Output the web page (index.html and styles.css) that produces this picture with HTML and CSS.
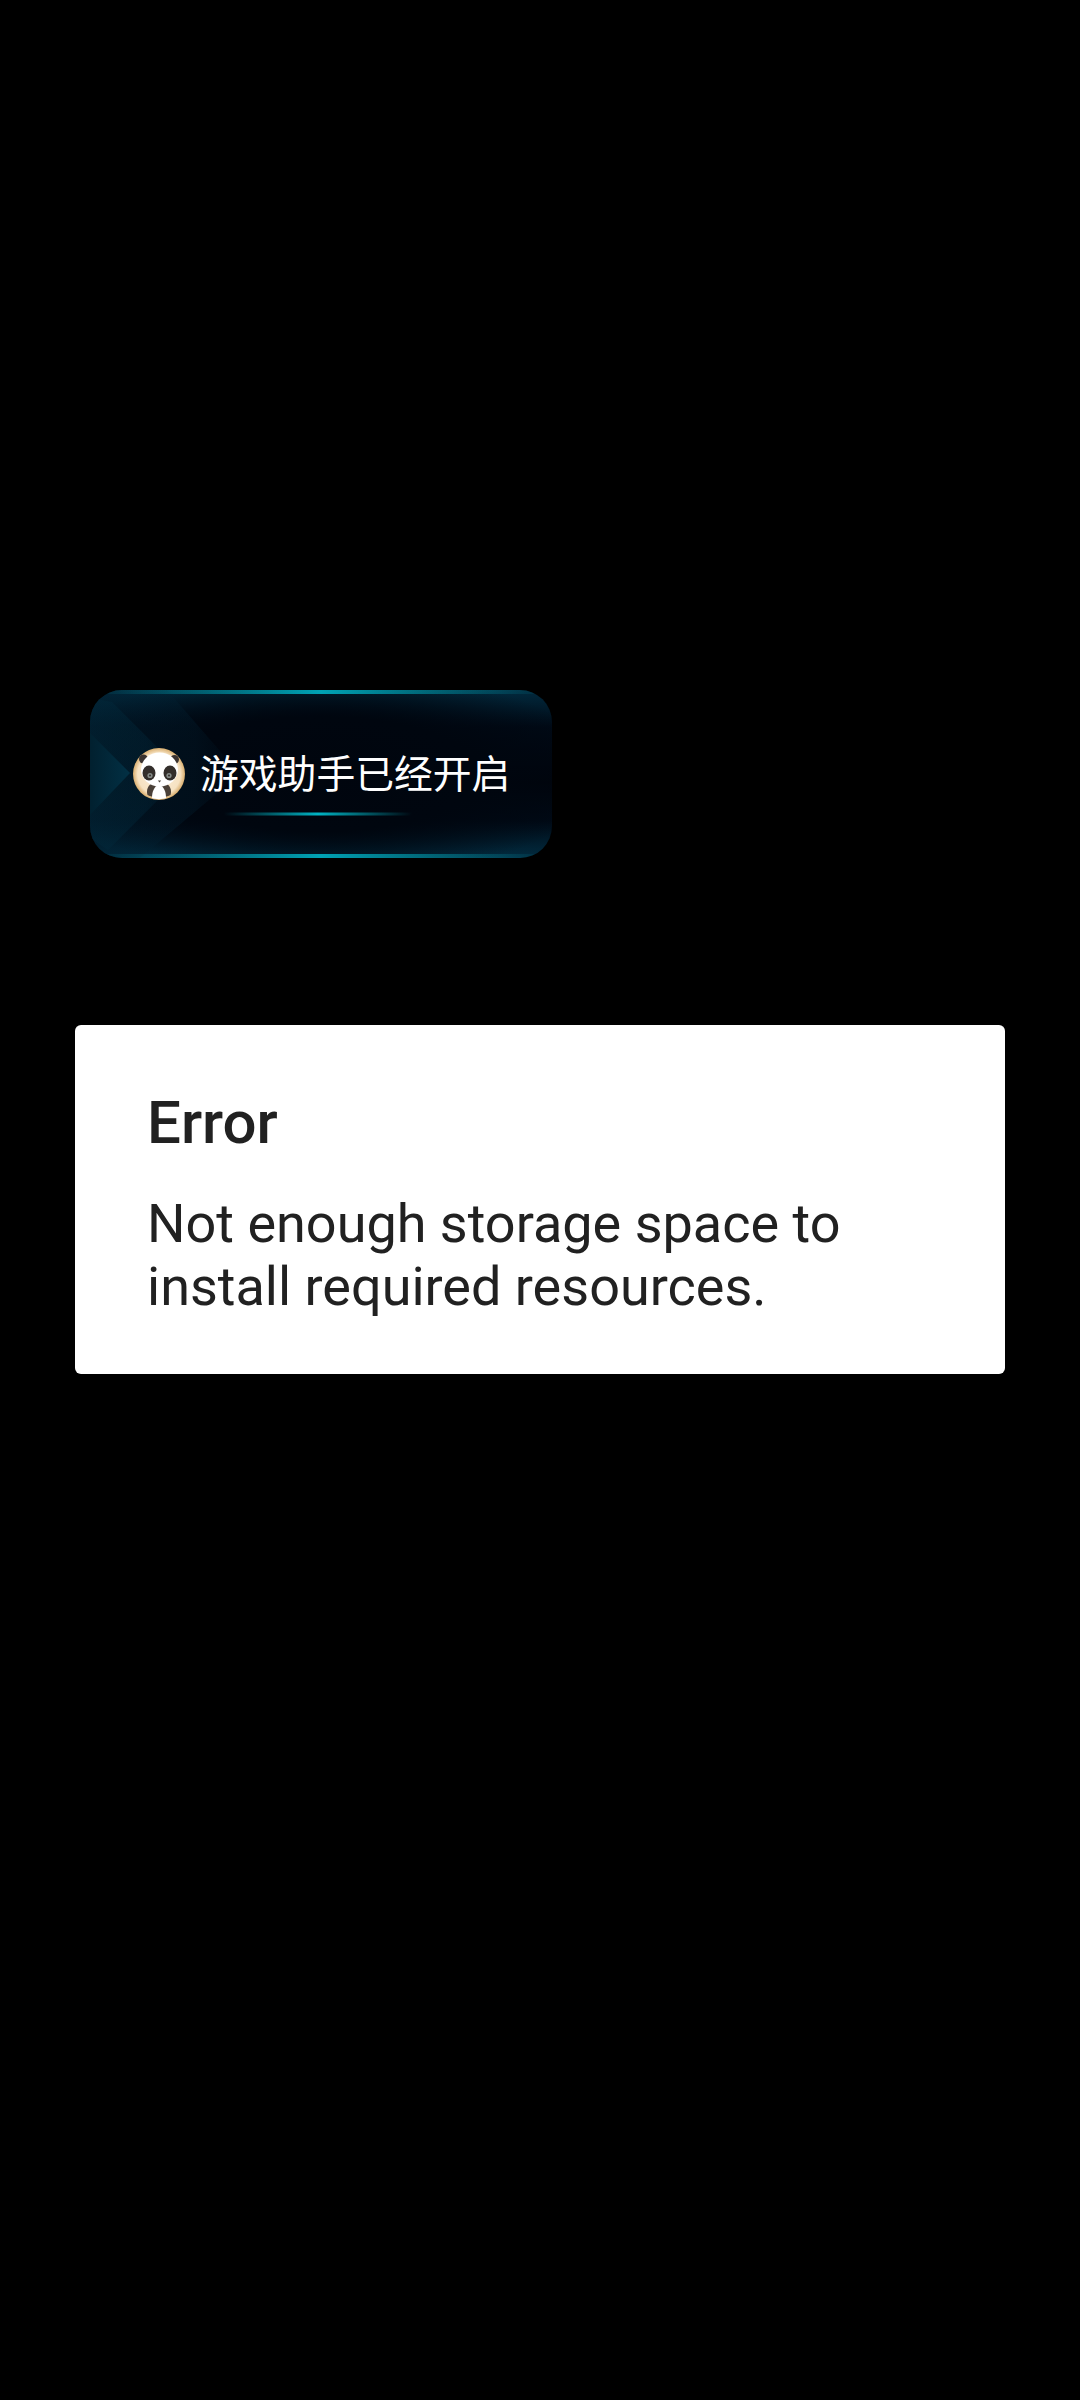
FILE: index.html
```html
<!DOCTYPE html>
<html lang="en">
<head>
<meta charset="utf-8">
<title>Error</title>
<link rel="stylesheet" href="styles.css">
</head>
<body>
<main class="screen">
  <div class="toast">
    <svg class="toast-art" viewBox="0 0 462 168" preserveAspectRatio="none" aria-hidden="true">
      <defs>
        <linearGradient id="edge" x1="0" x2="1" y1="0" y2="0">
          <stop offset="0" stop-color="#00a3b5" stop-opacity="0"/>
          <stop offset="0.15" stop-color="#00a3b5" stop-opacity="0.3"/>
          <stop offset="0.5" stop-color="#00a3b5"/>
          <stop offset="0.85" stop-color="#00a3b5" stop-opacity="0.3"/>
          <stop offset="1" stop-color="#00a3b5" stop-opacity="0"/>
        </linearGradient>
        <linearGradient id="rule" x1="0" x2="1" y1="0" y2="0">
          <stop offset="0" stop-color="#00b4c4" stop-opacity="0"/>
          <stop offset="0.5" stop-color="#00b4c4"/>
          <stop offset="1" stop-color="#00b4c4" stop-opacity="0"/>
        </linearGradient>
        <linearGradient id="band1" x1="0" x2="1" y1="0" y2="0">
          <stop offset="0" stop-color="#02283a" stop-opacity="0.5"/>
          <stop offset="0.6" stop-color="#02283a" stop-opacity="0.4"/>
          <stop offset="1" stop-color="#02283a" stop-opacity="0.08"/>
        </linearGradient>
        <linearGradient id="band2" x1="0" x2="1" y1="0" y2="0">
          <stop offset="0" stop-color="#021f30" stop-opacity="0.45"/>
          <stop offset="0.7" stop-color="#021f30" stop-opacity="0.35"/>
          <stop offset="1" stop-color="#021f30" stop-opacity="0"/>
        </linearGradient>
        <linearGradient id="tip" x1="0" x2="1" y1="0" y2="0">
          <stop offset="0" stop-color="#01202f"/>
          <stop offset="1" stop-color="#023044"/>
        </linearGradient>
        <radialGradient id="ring" cx="0.5" cy="0.5" r="0.5">
          <stop offset="0" stop-color="#fbeeda"/>
          <stop offset="0.82" stop-color="#f6e2c2"/>
          <stop offset="1" stop-color="#d9ae6e"/>
        </radialGradient>
      </defs>
      <polygon points="0,0 77,0 150,84 50,168 0,168" fill="url(#band2)"/>
      <polygon points="0,8 22,12 94,84 18,160 0,148" fill="url(#band1)"/>
      <polygon points="0,43 40,83 0,125" fill="url(#tip)"/>
      <rect x="0" y="0" width="462" height="4" fill="url(#edge)"/>
      <rect x="0" y="164" width="462" height="4" fill="url(#edge)"/>
      <rect x="134" y="122.5" width="188" height="3" fill="url(#rule)"/>
    </svg>
    <svg class="panda" viewBox="0 0 52 52" aria-hidden="true">
      <circle cx="26" cy="26" r="26" fill="url(#ring)"/>
      <circle cx="10.5" cy="11" r="4.5" fill="#3a3330"/>
      <circle cx="41.5" cy="11.5" r="4.5" fill="#3a3330"/>
      <path d="M14.5 47 C13 42 15 38 18 36 L34 36 C37 38 39 42 37.5 47 C33 50 19 50 14.5 47 Z" fill="#4a4038"/>
      <path d="M19 50 C19 44 21 38 26 37 C31 38 33 44 33 50 C29 51.5 23 51.5 19 50 Z" fill="#fff"/>
      <ellipse cx="26.5" cy="21.5" rx="18.5" ry="17" fill="#fff"/>
      <ellipse cx="16" cy="25" rx="6.5" ry="7.5" fill="#332e2b"/>
      <ellipse cx="37" cy="25" rx="6.5" ry="7.5" fill="#332e2b"/>
      <circle cx="17" cy="27.5" r="2.6" fill="#858b88"/>
      <circle cx="36" cy="27.5" r="2.6" fill="#858b88"/>
      <circle cx="17" cy="27.5" r="1.1" fill="#3a3532"/>
      <circle cx="36" cy="27.5" r="1.1" fill="#3a3532"/>
      <path d="M24.8 32.5 h3.4 l-1.7 2 Z" fill="#4a4038"/>
    </svg>
    <span class="toast-text">游戏助手已经开启</span>
  </div>

  <section class="dialog">
    <h1 class="dialog-title">Error</h1>
    <p class="dialog-message">Not enough storage space to<br>install required resources.</p>
  </section>
</main>
</body>
</html>
```

FILE: styles.css
```css
* { box-sizing: border-box; }

html, body {
  margin: 0;
  padding: 0;
  background: #000;
}

.screen {
  width: 1080px;
  height: 2400px;
  background: #000;
  padding-top: 690px;
  display: flex;
  flex-direction: column;
  font-family: Roboto, "Noto Sans", sans-serif;
}

.toast {
  position: relative;
  width: 462px;
  height: 168px;
  margin-left: 90px;
  padding-left: 43px;
  display: flex;
  align-items: center;
  border-radius: 32px;
  overflow: hidden;
  background:
    radial-gradient(ellipse 62% 62% at 50% 50%, #00050e 0%, #00060f 55%, rgba(0, 8, 18, 0) 100%),
    linear-gradient(180deg, #022a3e 0%, #000a16 22%, #00040c 55%, #000a16 78%, #022c40 100%);
}

.toast-art {
  position: absolute;
  inset: 0;
  width: 100%;
  height: 100%;
}

.panda {
  position: relative;
  flex: none;
  width: 52px;
  height: 52px;
}

.toast-text {
  position: relative;
  margin-left: 15px;
  padding-bottom: 6px;
  color: #fff;
  font-family: "Noto Sans CJK SC", sans-serif;
  font-size: 38.8px;
  line-height: 52px;
  white-space: nowrap;
}

.dialog {
  width: 930px;
  height: 349px;
  margin-top: 167px;
  margin-left: 75px;
  padding: 63px 72px 0;
  background: #fff;
  border-radius: 6px;
  color: #212121;
}

.dialog-title {
  margin: 0;
  font-size: 60px;
  font-weight: 500;
  line-height: 70px;
}

.dialog-message {
  margin: 35px 0 0;
  font-size: 54px;
  font-weight: 400;
  line-height: 62.7px;
}
```
